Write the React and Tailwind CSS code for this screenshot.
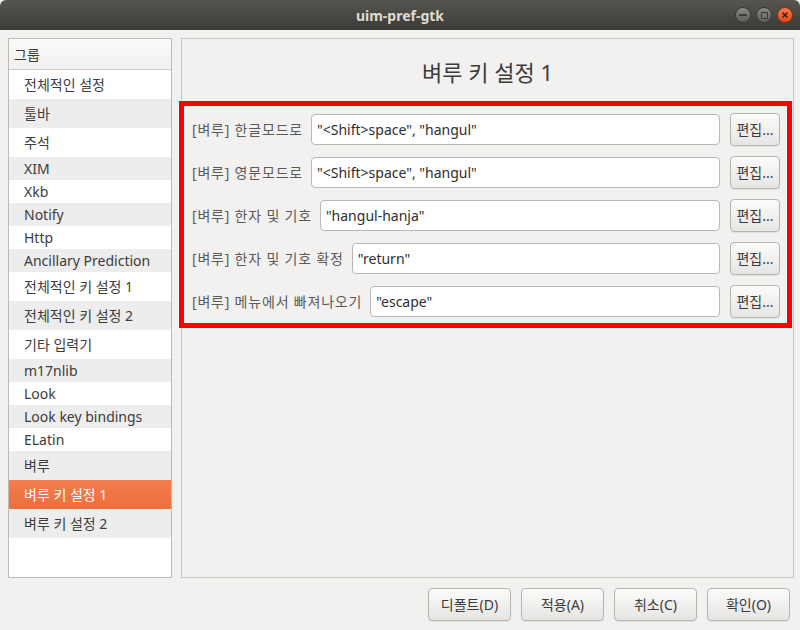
import React from 'react';

const font = { fontFamily: '"Noto Sans", "Noto Sans CJK KR", sans-serif' };

const groups = [
  { name: '전체적인 설정', tall: true },
  { name: '툴바', tall: true },
  { name: '주석', tall: true },
  { name: 'XIM' },
  { name: 'Xkb' },
  { name: 'Notify' },
  { name: 'Http' },
  { name: 'Ancillary Prediction' },
  { name: '전체적인 키 설정 1', tall: true },
  { name: '전체적인 키 설정 2', tall: true },
  { name: '기타 입력기', tall: true },
  { name: 'm17nlib' },
  { name: 'Look' },
  { name: 'Look key bindings' },
  { name: 'ELatin' },
  { name: '벼루', tall: true },
  { name: '벼루 키 설정 1', tall: true, selected: true },
  { name: '벼루 키 설정 2', tall: true },
];

const keys = [
  { label: '[벼루] 한글모드로', value: '"<Shift>space", "hangul"' },
  { label: '[벼루] 영문모드로', value: '"<Shift>space", "hangul"' },
  { label: '[벼루] 한자 및 기호', value: '"hangul-hanja"' },
  { label: '[벼루] 한자 및 기호 확정', value: '"return"' },
  { label: '[벼루] 메뉴에서 빠져나오기', value: '"escape"' },
];

function GtkButton({ children, className = '' }) {
  return (
    <button
      className={`rounded-[4px] border border-[#b6b4b0] bg-gradient-to-b from-[#fbfbfa] to-[#e6e5e3] text-[14px] text-[#3c3c3c] shadow-[0_1px_0_rgba(0,0,0,0.06)] ${className}`}
    >
      {children}
    </button>
  );
}

function App() {
  return (
    <div className="w-[800px] h-[630px] flex flex-col bg-[#f2f1f0] overflow-hidden" style={font}>
      {/* title bar */}
      <div className="h-[30px] shrink-0 relative flex items-center justify-center bg-gradient-to-b from-[#56554f] to-[#3c3b37] rounded-t-[6px]">
        <span className="text-[14px] font-bold text-[#dfdbd2]">uim-pref-gtk</span>
        <div className="absolute right-[7px] top-[7px] flex gap-[5px]">
          <div className="w-[16px] h-[16px] rounded-full bg-gradient-to-b from-[#8a8984] to-[#5f5e5a] border border-[#3a3935] flex items-center justify-center">
            <div className="w-[8px] h-[2px] bg-[#3c3b37]" />
          </div>
          <div className="w-[16px] h-[16px] rounded-full bg-gradient-to-b from-[#8a8984] to-[#5f5e5a] border border-[#3a3935] flex items-center justify-center">
            <div className="w-[7px] h-[7px] border-[1.5px] border-[#3c3b37]" />
          </div>
          <div className="w-[16px] h-[16px] rounded-full bg-gradient-to-b from-[#f47a4c] to-[#df4a16] border border-[#8a2c0c] flex items-center justify-center">
            <svg width="8" height="8" viewBox="0 0 8 8">
              <path d="M1.5 1.5 L6.5 6.5 M6.5 1.5 L1.5 6.5" stroke="#4a1a08" strokeWidth="1.5" />
            </svg>
          </div>
        </div>
      </div>

      {/* main */}
      <div className="flex-1 flex gap-[9px] pt-[8px] pl-[8px] pr-[6px]">
        {/* sidebar */}
        <div className="w-[164px] shrink-0 border border-[#bcbab6] bg-white flex flex-col">
          <div className="h-[31px] shrink-0 flex items-center pl-[5px] text-[14px] text-[#3c3c3c] bg-gradient-to-b from-[#fbfbfa] to-[#f1f0ef] border-b border-[#cfcdca]">
            그룹
          </div>
          {groups.map((g, i) => (
            <div
              key={g.name}
              className={`${g.tall ? 'h-[29px]' : 'h-[23px]'} shrink-0 flex items-center pl-[15px] text-[14px] whitespace-nowrap ${
                g.selected
                  ? 'bg-gradient-to-b from-[#f27d4e] to-[#ee6e3c] text-white'
                  : i % 2 === 1
                  ? 'bg-[#ededed] text-[#3c3c3c]'
                  : 'bg-white text-[#3c3c3c]'
              }`}
            >
              {g.name}
            </div>
          ))}
        </div>

        {/* settings panel */}
        <div className="flex-1 border border-[#c8c6c2] flex flex-col">
          <div className="h-[62px] shrink-0 flex items-center justify-center pt-[5px] text-[22px] text-[#3c3c3c]">
            벼루 키 설정 1
          </div>
          <div className="-ml-[3px] mr-[1px] border-[5px] border-[#ff0000] pt-[7px] pb-[5px] pl-[8px] pr-[7px] flex flex-col gap-[10px]">
            {keys.map((k) => (
              <div key={k.label} className="h-[33px] flex items-center">
                <span className="text-[14px] tracking-[0.8px] text-[#5a5a5a] whitespace-nowrap">{k.label}</span>
                <div className="ml-[8px] flex-1 h-[31px] rounded-[4px] border border-[#b9b7b3] bg-white flex items-center pl-[5px] text-[14px] text-[#2e2e2e] whitespace-nowrap">
                  {k.value}
                </div>
                <GtkButton className="ml-[10px] w-[50px] h-[33px] shrink-0">편집...</GtkButton>
              </div>
            ))}
          </div>
        </div>
      </div>

      {/* bottom buttons */}
      <div className="h-[52px] shrink-0 flex items-center justify-end gap-[10px] pr-[10px] pt-[1px]">
        <GtkButton className="w-[83px] h-[33px]">디폴트(D)</GtkButton>
        <GtkButton className="w-[83px] h-[33px]">적용(A)</GtkButton>
        <GtkButton className="w-[83px] h-[33px]">취소(C)</GtkButton>
        <GtkButton className="w-[83px] h-[33px]">확인(O)</GtkButton>
      </div>
    </div>
  );
}

export default App;
